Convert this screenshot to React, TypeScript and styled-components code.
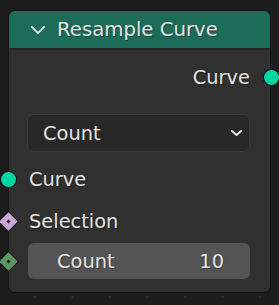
import React from 'react'
import styled, { createGlobalStyle } from 'styled-components'

const GlobalStyle = createGlobalStyle`
  html, body {
    margin: 0;
    padding: 0;
    width: 279px;
    height: 305px;
    overflow: hidden;
    background-color: #1d1d1d;
    background-image: radial-gradient(circle, #2c2c2c 1.1px, transparent 1.6px);
    background-size: 37.5px 37.5px;
    background-position: 16.25px 15.75px;
  }
  body {
    font-family: "DejaVu Sans", "Liberation Sans", sans-serif;
    color: #e4e4e4;
  }
`

const Canvas = styled.div`
  padding: 11px 0 0 9px;
`

const Node = styled.div`
  width: 261px;
  background: #303030;
  border-radius: 6px;
  box-shadow: 0 0 0 1px #161616;
`

const Header = styled.div`
  height: 37px;
  display: flex;
  align-items: center;
  background: #1d6c5a;
  border-radius: 6px 6px 0 0;
  border-bottom: 2px solid #262626;
  padding-left: 21px;
  gap: 11px;
  font-size: 19.7px;
  text-shadow: 1px 1px 1px rgba(0, 0, 0, 0.35);
`

const Body = styled.div`
  display: flex;
  flex-direction: column;
  padding: 7px 0 13px;
`

const Row = styled.div<{ $out?: boolean; $mt?: number }>`
  position: relative;
  height: 40px;
  margin-top: ${p => p.$mt ?? 0}px;
  display: flex;
  align-items: center;
  justify-content: ${p => (p.$out ? 'flex-end' : 'flex-start')};
  padding: ${p => (p.$out ? '0 20px 0 0' : '0 0 0 20px')};
  font-size: 19.4px;
  text-shadow: 1px 1px 1px rgba(0, 0, 0, 0.3);
`

const Socket = styled.span<{ $side: 'left' | 'right'; $color: string }>`
  position: absolute;
  top: 50%;
  ${p => p.$side}: -8.5px;
  width: 15px;
  height: 15px;
  margin-top: -7.5px;
  border-radius: 50%;
  background: ${p => p.$color};
  box-shadow: 0 0 0 1px #141414;
`

const Diamond = styled.span<{ $color: string }>`
  position: absolute;
  top: 50%;
  left: -7px;
  width: 13px;
  height: 13px;
  margin-top: -6.5px;
  transform: rotate(45deg);
  background: ${p => p.$color};
  box-shadow: 0 0 0 1px #141414;
  display: flex;
  align-items: center;
  justify-content: center;
  &::after {
    content: '';
    width: 3px;
    height: 3px;
    background: #1e1e1e;
  }
`

const Select = styled.div`
  margin: 17px 20px 0 18px;
  height: 38px;
  box-sizing: border-box;
  display: flex;
  align-items: center;
  justify-content: space-between;
  padding: 0 6px 0 15px;
  background: #282828;
  border: 1px solid #3a3a3a;
  border-radius: 6px;
  font-size: 19.4px;
`

const Field = styled.div`
  position: relative;
  margin: 2px 20px 0 19px;
  height: 36px;
  display: flex;
  align-items: center;
  justify-content: space-between;
  padding: 0 26px 0 29px;
  background: #545454;
  border-radius: 6px;
  font-size: 19.4px;
  text-shadow: 1px 1px 1px rgba(0, 0, 0, 0.3);
`

const FieldSocket = styled(Diamond)`
  left: -26px;
`

const Chevron = ({ w, h, sw }: { w: number; h: number; sw: number }) => (
  <svg width={w} height={h} viewBox={`0 0 ${w} ${h}`}>
    <polyline
      points={`${sw},${sw} ${w / 2},${h - sw} ${w - sw},${sw}`}
      fill="none"
      stroke="#e2e2e2"
      strokeWidth={sw}
      strokeLinecap="round"
      strokeLinejoin="round"
    />
  </svg>
)

export default function App() {
  return (
    <>
      <GlobalStyle />
      <Canvas>
        <Node>
          <Header>
            <Chevron w={16} h={10} sw={1.8} />
            <span>Resample Curve</span>
          </Header>
          <Body>
            <Row $out>
              Curve
              <Socket $side="right" $color="#00d6a3" />
            </Row>
            <Select>
              <span>Count</span>
              <Chevron w={13} h={8} sw={2} />
            </Select>
            <Row $mt={7}>
              <Socket $side="left" $color="#00d6a3" />
              Curve
            </Row>
            <Row $mt={2}>
              <Diamond $color="#cca6d6" />
              Selection
            </Row>
            <Field>
              <FieldSocket $color="#5a9a60" />
              <span>Count</span>
              <span>10</span>
            </Field>
          </Body>
        </Node>
      </Canvas>
    </>
  )
}
